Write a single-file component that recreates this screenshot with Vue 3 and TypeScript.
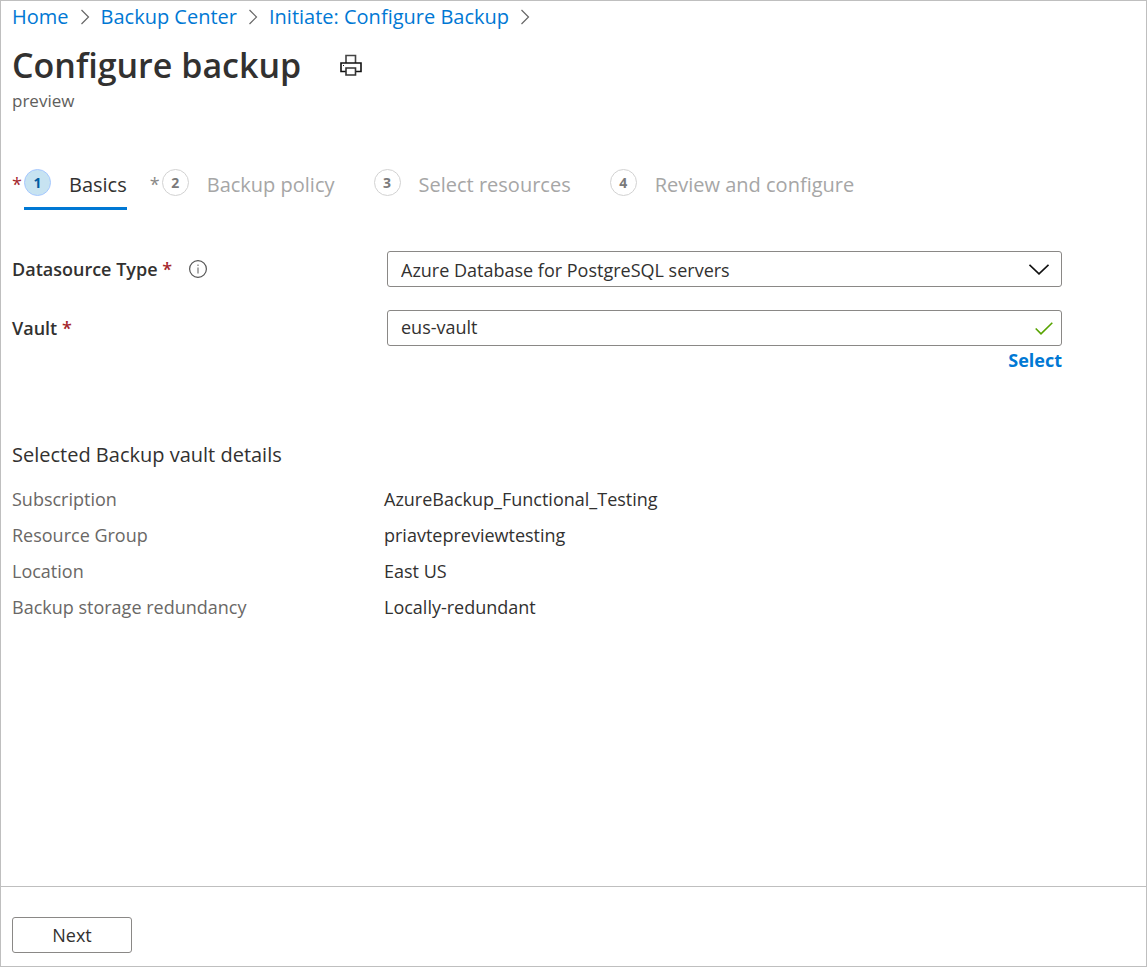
<script setup lang="ts">
import { ref } from 'vue'

interface Step {
  label: string
  mark: boolean
}

const crumbs: string[] = ['Home', 'Backup Center', 'Initiate: Configure Backup']

const steps: Step[] = [
  { label: 'Basics', mark: true },
  { label: 'Backup policy', mark: true },
  { label: 'Select resources', mark: false },
  { label: 'Review and configure', mark: false },
]

const details: { name: string; value: string }[] = [
  { name: 'Subscription', value: 'AzureBackup_Functional_Testing' },
  { name: 'Resource Group', value: 'priavtepreviewtesting' },
  { name: 'Location', value: 'East US' },
  { name: 'Backup storage redundancy', value: 'Locally-redundant' },
]

const active = ref(0)
const datasource = ref('Azure Database for PostgreSQL servers')
const vault = ref('eus-vault')
</script>

<template>
  <div class="page">
    <nav class="crumbs" aria-label="Breadcrumb">
      <template v-for="crumb in crumbs" :key="crumb">
        <a href="#">{{ crumb }}</a>
        <svg class="crumb-arrow" viewBox="0 0 9 16" aria-hidden="true">
          <path d="M1 1 L8 8 L1 15" fill="none" stroke="#666" stroke-width="1.2" />
        </svg>
      </template>
    </nav>

    <header class="title-row">
      <h1>Configure backup</h1>
      <button class="print" type="button" aria-label="Print">
        <svg viewBox="0 0 22 22" aria-hidden="true">
          <path d="M6 9 V1.500 H15.500 V9" fill="#fff" stroke="#444" stroke-width="1.600" />
          <path d="M1 9 H21 V17.500 H1 Z" fill="#fff" stroke="#111" stroke-width="1.600" />
          <path d="M6 14 H15.500 V21 H6 Z" fill="#fff" stroke="#333" stroke-width="1.600" />
          <rect x="3" y="11" width="1" height="1" fill="#1b1b1b" />
        </svg>
      </button>
    </header>
    <p class="subtitle">preview</p>

    <nav class="steps" aria-label="Steps">
      <div v-for="(step, i) in steps" :key="step.label" class="step" :class="{ current: i === active }">
        <span v-if="step.mark" class="mark">*</span>
        <button type="button" class="step-button" @click="active = i">
          <span class="number">{{ i + 1 }}</span>
          <span class="step-label">{{ step.label }}</span>
        </button>
      </div>
    </nav>

    <form class="form" @submit.prevent>
      <div class="field">
        <div class="field-name">
          <label for="datasource">Datasource Type <span class="required">*</span></label>
          <svg class="info" viewBox="0 0 20 20" aria-hidden="true">
            <circle cx="10" cy="10" r="8.400" fill="none" stroke="#555" stroke-width="1.2" />
            <path d="M10 8.500 V14.500 M10 5.500 V7" stroke="#777" stroke-width="1.2" />
          </svg>
        </div>
        <div class="control">
          <select id="datasource" v-model="datasource">
            <option>Azure Database for PostgreSQL servers</option>
          </select>
          <svg class="chevron" viewBox="0 0 20 11" aria-hidden="true">
            <path d="M0.500 0.800 L10 9.800 L19.500 0.800" fill="none" stroke="#111" stroke-width="1.600" />
          </svg>
        </div>
      </div>

      <div class="field">
        <div class="field-name">
          <label for="vault">Vault <span class="required">*</span></label>
        </div>
        <div class="control">
          <input id="vault" v-model="vault" type="text" />
          <svg class="check" viewBox="0 0 18 13" aria-hidden="true">
            <path d="M0.700 6.500 L6 11.800 L17.300 0.700" fill="none" stroke="#57a300" stroke-width="1.600" />
          </svg>
        </div>
      </div>
      <div class="select-row"><a href="#">Select</a></div>
    </form>

    <section class="details">
      <h2>Selected Backup vault details</h2>
      <dl>
        <template v-for="item in details" :key="item.name">
          <dt>{{ item.name }}</dt>
          <dd>{{ item.value }}</dd>
        </template>
      </dl>
    </section>

    <footer class="footer">
      <button type="button" class="next">Next</button>
    </footer>
  </div>
</template>

<style>
body {
  margin: 0;
  background: #fff;
}
</style>

<style scoped>
.page {
  box-sizing: border-box;
  min-height: 100vh;
  display: flex;
  flex-direction: column;
  border: 1px solid #bfbfbf;
  color: #323130;
  font-family: "Open Sans", "Noto Sans", sans-serif;
  font-size: 18px;
  line-height: 36px;
}

button,
input,
select {
  font: inherit;
  color: inherit;
}

a {
  color: #0078d4;
  text-decoration: none;
}

.crumbs {
  display: flex;
  align-items: center;
  gap: 11px;
  padding: 0 11px;
  font-size: 20px;
  line-height: 32px;
}

.crumb-arrow {
  width: 10px;
  height: 16px;
}

.title-row {
  display: flex;
  align-items: center;
  gap: 39px;
  padding: 6px 11px 0;
}

h1 {
  margin: 0;
  font-size: 34px;
  line-height: 52px;
  font-weight: 600;
}

.print {
  display: flex;
  padding: 0;
  border: 0;
  background: none;
}

.print svg {
  width: 22px;
  height: 22px;
}

.subtitle {
  margin: 0;
  padding: 0 11px;
  color: #605e5c;
  font-size: 17px;
  line-height: 20px;
}

.steps {
  display: flex;
  gap: 23px;
  padding: 58px 11px 0;
}

.step {
  display: flex;
  color: #a6a6a6;
}

.step:nth-child(n + 3) {
  padding-left: 16px;
}

.mark {
  width: 12px;
  color: #8a8886;
  font-size: 18px;
  line-height: 30px;
}

.step-button {
  display: flex;
  gap: 18px;
  padding: 0 0 6px;
  border: 0;
  border-bottom: 3px solid transparent;
  background: none;
  font-size: 20px;
  line-height: 32px;
}

.number {
  box-sizing: border-box;
  width: 27px;
  height: 27px;
  border: 1px solid #d2d2d2;
  border-radius: 50%;
  color: #7a7a7a;
  font-size: 14px;
  line-height: 25px;
  font-weight: 700;
  text-align: center;
}

.current {
  color: #323130;
}

.current .mark,
.required {
  color: #a4262c;
}

.current .step-button {
  border-color: #0078d4;
}

.current .step-label {
  font-weight: 500;
}

.current .number {
  border-color: #a6c8ff;
  background: #c7e3f1;
  color: #005ba1;
}

.form {
  padding: 41px 84px 0 11px;
}

.field {
  display: grid;
  grid-template-columns: 375px 1fr;
}

.field + .field {
  margin-top: 23px;
}

.field-name {
  display: flex;
  align-items: center;
  gap: 16px;
  font-weight: 600;
}

.info {
  width: 20px;
  height: 20px;
}

.control {
  position: relative;
}

.control select,
.control input {
  box-sizing: border-box;
  display: block;
  width: 100%;
  height: 36px;
  padding: 0 48px 2px 13px;
  border: 1px solid #8a8886;
  border-radius: 3px;
  background: #fff;
  appearance: none;
}

.chevron {
  position: absolute;
  top: 13px;
  right: 13px;
  width: 20px;
  height: 11px;
  pointer-events: none;
}

.check {
  position: absolute;
  top: 12px;
  right: 9px;
  width: 18px;
  height: 13px;
}

.select-row {
  text-align: right;
  font-weight: 700;
  line-height: 28px;
}

.details {
  flex: 1;
  padding: 63px 11px 24px;
}

h2 {
  margin: 0 0 8px;
  font-size: 20px;
  line-height: 36px;
  font-weight: 400;
}

dl {
  display: grid;
  grid-template-columns: 372px 1fr;
  margin: 0;
}

dt {
  color: #6a6866;
}

dd {
  margin: 0;
}

.footer {
  padding: 30px 11px 13px;
  border-top: 1px solid #bfbfbf;
}

.next {
  display: block;
  width: 120px;
  height: 36px;
  padding: 0;
  border: 1px solid #8a8886;
  border-radius: 3px;
  background: #fff;
  font-weight: 500;
  line-height: 34px;
}
</style>
